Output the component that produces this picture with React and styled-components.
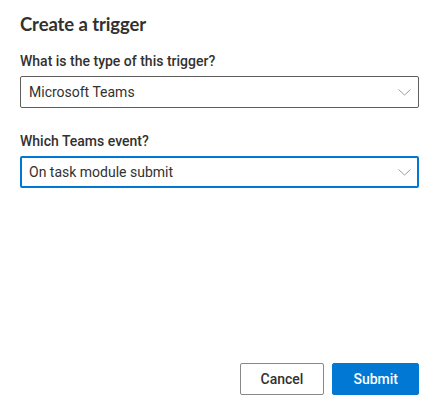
import React, { useState } from 'react'
import styled, { createGlobalStyle } from 'styled-components'

const GlobalStyle = createGlobalStyle`
  * { box-sizing: border-box; }
  html, body { margin: 0; padding: 0; background: #ffffff; }
  body {
    font-family: "Segoe UI", Roboto, "Liberation Sans", sans-serif;
    color: #323130;
    -webkit-font-smoothing: antialiased;
  }
`

function Chevron() {
  return (
    <svg width="13" height="7" viewBox="0 0 13 7" fill="none">
      <path d="M0.5 0.5 L6.5 6 L12.5 0.5" stroke="#a19f9d" strokeWidth="1" />
    </svg>
  )
}

function Dropdown({ label, value, focused }) {
  return (
    <Field>
      <Label>{label}</Label>
      <SelectBox $focused={focused}>
        <SelectText>{value}</SelectText>
        <Caret>
          <Chevron />
        </Caret>
      </SelectBox>
    </Field>
  )
}

export default function App() {
  const [type] = useState('Microsoft Teams')
  const [event] = useState('On task module submit')

  return (
    <>
      <GlobalStyle />
      <Dialog>
        <Title>Create a trigger</Title>
        <Body>
          <Dropdown label="What is the type of this trigger?" value={type} />
          <Dropdown label="Which Teams event?" value={event} focused />
        </Body>
        <Footer>
          <Button>Cancel</Button>
          <Button $primary>Submit</Button>
        </Footer>
      </Dialog>
    </>
  )
}

//styled-component
const Dialog = styled.div`
  min-height: 100vh;
  display: flex;
  flex-direction: column;
  padding: 10px 20px 20px;
`

const Title = styled.h1`
  margin: 0;
  font-family: "Segoe UI", Lato, Roboto, sans-serif;
  font-size: 18.5px;
  line-height: 28px;
  font-weight: 700;
  letter-spacing: -0.1px;
  color: #323130;
`

const Body = styled.div`
  display: flex;
  flex-direction: column;
  gap: 18px;
  margin-top: 8px;
`

const Field = styled.div`
  display: flex;
  flex-direction: column;
`

const Label = styled.label`
  font-size: 14px;
  line-height: 20px;
  font-weight: 500;
  padding: 5px 0;
  color: #323130;
`

const SelectBox = styled.div`
  height: 32px;
  display: flex;
  align-items: center;
  border: ${p => (p.$focused ? '2px solid #0078d4' : '1px solid #605e5c')};
  border-radius: 2px;
  padding: ${p => (p.$focused ? '0 6px 0 7px' : '0 7px 0 8px')};
  background: #ffffff;
  cursor: pointer;
`

const SelectText = styled.span`
  flex: 1;
  font-size: 14px;
  line-height: 20px;
  color: #323130;
  white-space: nowrap;
  overflow: hidden;
`

const Caret = styled.span`
  display: flex;
  align-items: center;
`

const Footer = styled.div`
  margin-top: auto;
  display: flex;
  justify-content: flex-end;
  gap: 8px;
`

const Button = styled.button`
  min-width: 80px;
  height: 32px;
  padding: 0 20px;
  border-radius: 2px;
  font-family: inherit;
  font-size: 14px;
  font-weight: 500;
  cursor: pointer;
  border: 1px solid ${p => (p.$primary ? '#0078d4' : '#8a8886')};
  background: ${p => (p.$primary ? '#0078d4' : '#ffffff')};
  color: ${p => (p.$primary ? '#ffffff' : '#323130')};
`
